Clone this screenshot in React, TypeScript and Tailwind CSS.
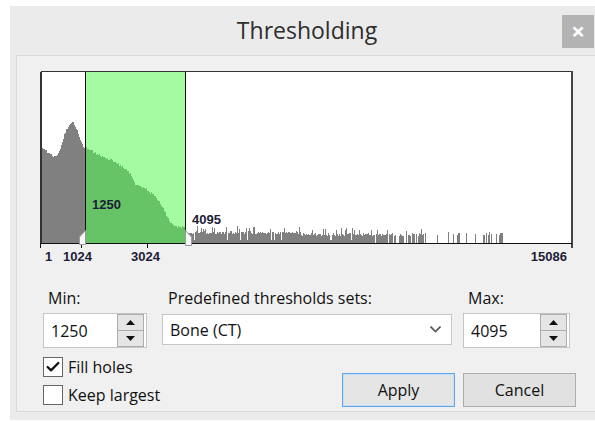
import { Check } from 'lucide-react';

// control points of the histogram envelope (x, y), baseline at y = 171
const CURVE: [number, number][] = [
  [0, 75], [5, 79], [10, 83], [15, 85], [18, 80], [22, 66], [25, 58], [28, 53],
  [31, 51], [33, 52], [36, 58], [39, 68], [42, 75], [44, 76], [50, 79], [56, 82],
  [62, 85], [69, 88], [75, 91], [80, 94], [86, 98], [90, 103], [94, 112], [100, 115],
  [106, 118], [112, 123], [117, 128], [122, 137], [126, 145], [129, 151], [133, 154],
  [137, 155], [141, 155], [144, 156],
];

function seeded(seed: number) {
  let s = seed;
  return () => {
    s = (s * 16807) % 2147483647;
    return (s - 1) / 2147483646;
  };
}

function envelopeAt(x: number) {
  for (let i = 0; i < CURVE.length - 1; i++) {
    const [x0, y0] = CURVE[i];
    const [x1, y1] = CURVE[i + 1];
    if (x >= x0 && x <= x1) return y0 + ((y1 - y0) * (x - x0)) / (x1 - x0);
  }
  return CURVE[CURVE.length - 1][1];
}

function buildPaths() {
  const rnd = seeded(42);
  let body = 'M0 171';
  for (let x = 0; x < 145; x++) {
    const y = Math.round(envelopeAt(x) + (rnd() - 0.5) * 2.5);
    body += ` V${y} H${x + 1}`;
  }
  body += ' V171 Z';

  // long low tail after the upper threshold
  let tail = '';
  for (let x = 145; x < 462; x++) {
    let h = 0;
    const r = rnd();
    if (x < 384) {
      const lift = x < 260 ? 2 : 0;
      h = r < 0.12 ? 3 : 7 + lift + Math.round(rnd() * 3) + (r > 0.88 ? 5 : 0);
      if (x > 330 && r < 0.3) h = 0;
    } else {
      h = r < 0.28 ? 8 + Math.round(rnd() * 3) : 0;
    }
    if (h > 0) tail += `M${x} 171 V${171 - h} H${x + 1} V171 Z `;
  }
  return { body, tail };
}

function Histogram() {
  const { body, tail } = buildPaths();
  const label = { fontFamily: '"Liberation Sans", Arial, sans-serif', fontWeight: 700, fontSize: 13, fill: '#1d1d36' };
  return (
    <svg width={535} height={196} className="block">
      <defs>
        <clipPath id="range">
          <rect x={45} y={0} width={100} height={173} />
        </clipPath>
      </defs>
      <g transform="translate(1,1)">
        <rect x={0} y={0} width={530} height={171} fill="#ffffff" />
        <rect x={44} y={0} width={100} height={171} fill="#a4fba1" />
        <path d={body} fill="#808080" />
        <path d={tail} fill="#808080" />
        <path d={body} fill="#66c366" clipPath="url(#range)" />

        {/* frame and axis */}
        <rect x={-1} y={0} width={2} height={172} fill="#333" />
        <rect x={0} y={-1} width={531} height={1} fill="#333" />
        <rect x={530} y={-1} width={2} height={177} fill="#444" />
        <rect x={0} y={171} width={531} height={1} fill="#111" />
        <rect x={-1} y={171} width={1} height={5} fill="#111" />
        <rect x={40} y={171} width={1} height={5} fill="#111" />
        <rect x={106} y={171} width={1} height={5} fill="#111" />

        {/* threshold lines */}
        <rect x={44} y={0} width={1} height={171} fill="#111" />
        <rect x={144} y={0} width={1} height={171} fill="#111" />

        {/* drag handles */}
        <path d="M44.5 158.5 V172.5 H38.5 V165 Z" fill="#f8f8f8" stroke="#9a9a9a" />
        <path d="M144.5 158.5 L150.5 165 V173.5 H144.5 Z" fill="#f8f8f8" stroke="#9a9a9a" />

        <text x={51} y={137} style={label}>1250</text>
        <text x={151} y={152} style={label}>4095</text>

        <text x={4} y={189} style={label}>1</text>
        <text x={22} y={189} style={label}>1024</text>
        <text x={90} y={189} style={label}>3024</text>
        <text x={526} y={189} textAnchor="end" style={label}>15086</text>
      </g>
    </svg>
  );
}

function Arrow({ up }: { up?: boolean }) {
  return (
    <svg width={9} height={5} viewBox="0 0 9 5">
      <path d={up ? 'M0 5 L4.5 0 L9 5 Z' : 'M0 0 L9 0 L4.5 5 Z'} fill="#111" />
    </svg>
  );
}

function SpinBox({ value, className }: { value: string; className: string }) {
  return (
    <div className={`flex h-[35px] border border-[#c6c6c6] bg-white ${className}`}>
      <div className="flex flex-1 items-center pl-[7px] text-[16px] text-[#111]">{value}</div>
      <div className="mr-[2px] flex w-[27px] flex-col border border-[#adadad] bg-[#e5e5e5]">
        <div className="flex flex-1 items-center justify-center border-b border-[#adadad]">
          <Arrow up />
        </div>
        <div className="flex flex-1 items-center justify-center">
          <Arrow />
        </div>
      </div>
    </div>
  );
}

function CheckBox({ label, checked }: { label: string; checked?: boolean }) {
  return (
    <div className="flex h-[20px] items-center">
      <div className="flex h-[20px] w-[20px] items-center justify-center border border-[#666] bg-white">
        {checked && <Check size={16} strokeWidth={3.5} color="#111" />}
      </div>
      <span className="ml-[5px] text-[16px] text-[#111]">{label}</span>
    </div>
  );
}

export default function App() {
  return (
    <div
      className="h-[421px] w-[595px] overflow-hidden bg-white pl-[10px] pt-[6px]"
      style={{ fontFamily: '"Open Sans", "Noto Sans", sans-serif' }}
    >
      <div className="flex h-[414px] w-[594px] flex-col bg-[#ebebeb] px-[6px] pb-[8px]">
        {/* title bar */}
        <div className="relative flex h-[49px] shrink-0 items-center justify-center">
          <span className="text-[23px] text-[#2e2e2e]">Thresholding</span>
          <div className="absolute right-[4px] top-[9px] flex h-[33px] w-[32px] items-center justify-center bg-[#b3b3b3] pb-[2px] text-[24px] font-bold leading-none text-white">
            ×
          </div>
        </div>

        {/* dialog body */}
        <div className="flex flex-1 flex-col border border-[#dadada] bg-[#f0f0f0] pt-[15px]">
          <div className="ml-[23px]">
            <Histogram />
          </div>

          <div className="ml-[26px] mt-[21px] flex">
            <div className="flex flex-col">
              <div className="h-[20px] pl-[5px] text-[16px] leading-[20px] text-[#111]">Min:</div>
              <SpinBox value="1250" className="mt-[5px] w-[104px]" />
            </div>
            <div className="ml-[15px] flex flex-col">
              <div className="h-[20px] pl-[6px] text-[16px] leading-[20px] text-[#111]">Predefined thresholds sets:</div>
              <div className="mt-[6px] flex h-[31px] w-[290px] items-center justify-between border border-[#c6c6c6] bg-white pl-[7px] pr-[10px] text-[16px] text-[#111]">
                <span>Bone (CT)</span>
                <svg width={11} height={7} viewBox="0 0 11 7">
                  <path d="M0.5 0.5 L5.5 5.5 L10.5 0.5" fill="none" stroke="#555" strokeWidth={1.6} />
                </svg>
              </div>
            </div>
            <div className="ml-[11px] flex flex-col">
              <div className="h-[20px] pl-[5px] text-[16px] leading-[20px] text-[#111]">Max:</div>
              <SpinBox value="4095" className="mt-[5px] w-[107px]" />
            </div>
          </div>

          <div className="ml-[26px] mt-[9px] flex items-start">
            <div className="flex flex-col gap-[8px]">
              <CheckBox label="Fill holes" checked />
              <CheckBox label="Keep largest" />
            </div>
            <div className="ml-auto mr-[21px] mt-[16px] flex gap-[8px]">
              <div className="flex h-[34px] w-[113px] items-center justify-center border border-[#5ea6ec] bg-[#e5e5e5] text-[16px] text-[#111] shadow-[inset_0_0_0_1px_#c7e0f7]">
                Apply
              </div>
              <div className="flex h-[34px] w-[113px] items-center justify-center border border-[#adadad] bg-[#e1e1e1] text-[16px] text-[#111]">
                Cancel
              </div>
            </div>
          </div>
        </div>
      </div>
    </div>
  );
}
